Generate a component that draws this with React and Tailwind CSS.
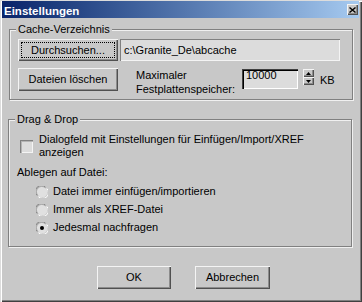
const raised = "bg-[#c8c8c8] shadow-[inset_1px_1px_#f4f4f4,inset_-1px_-1px_#505050,inset_-2px_-2px_#8c8c8c]"

function Radio({ checked }) {
  return (
    <svg width="12" height="12" viewBox="0 0 12 12" className="shrink-0">
      <circle cx="6" cy="6" r="5.5" fill="#e0e0e0" />
      <path d="M1.2 9.5 A5.4 5.4 0 0 1 9.5 1.2" fill="none" stroke="#808080" strokeWidth="1" />
      <path d="M2 9.6 A5 5 0 0 1 9.6 2" fill="none" stroke="#a8a8a8" strokeWidth="1" />
      <path d="M10.8 2.5 A5.4 5.4 0 0 1 2.5 10.8" fill="none" stroke="#ffffff" strokeWidth="1" />
      {checked && <circle cx="6" cy="6" r="2" fill="#000" />}
    </svg>
  )
}

function Spinner() {
  return (
    <div className="ml-[5px] flex w-[11px] flex-col">
      <div className={"flex h-[8px] items-center justify-center " + raised}>
        <svg width="5" height="3" viewBox="0 0 5 3"><path d="M2.5 0 L5 3 L0 3 Z" fill="#000" /></svg>
      </div>
      <div className={"flex h-[8px] items-center justify-center " + raised}>
        <svg width="5" height="3" viewBox="0 0 5 3"><path d="M0 0 L5 0 L2.5 3 Z" fill="#000" /></svg>
      </div>
    </div>
  )
}

export default function App() {
  return (
    <div className="flex h-[302px] w-[362px] flex-col bg-[#c8c8c8] pt-[1px] pr-[3px] pb-[3px] pl-[2px] font-['Liberation_Sans',Arial,sans-serif] text-[11px] leading-[13px] text-black shadow-[inset_1px_1px_#dcdcdc,inset_2px_2px_#ffffff,inset_-1px_-1px_#404040,inset_-2px_-2px_#808080]">
      <div className="flex h-[17px] justify-between bg-gradient-to-r from-[#0a246a] to-[#a6caf0] pr-[1px] pl-[2px]">
        <span className="mt-[4px] text-[11.5px] font-bold text-white">Einstellungen</span>
        <div className={"mt-[3px] flex h-[11px] w-[11px] items-center justify-center " + raised}>
          <svg width="7" height="6" viewBox="0 0 7 6">
            <path d="M0.5 0.5 L6.5 5.5 M6.5 0.5 L0.5 5.5" stroke="#000" strokeWidth="1.4" />
          </svg>
        </div>
      </div>

      <div className="flex flex-col pr-[6px] pl-[7px]">
        <fieldset className="mt-[5px] border border-[#808080] pr-[8px] pb-[3px] pl-[6px] shadow-[1px_1px_#f0f0f0,inset_1px_1px_#f0f0f0]">
          <legend className="bg-[#c8c8c8] px-[2px]">Cache-Verzeichnis</legend>
          <div className="mt-[3px] ml-[2px] flex gap-[2px]">
            <button className={"h-[22px] w-[100px] p-[3px] " + raised}>
              <div className="flex h-full w-full items-center justify-center border border-dotted border-black">
                Durchsuchen...
              </div>
            </button>
            <div className="flex h-[22px] w-[220px] items-center bg-[#dcdcdc] pl-[4px] shadow-[inset_1px_1px_#808080,inset_-1px_-1px_#f4f4f4]">
              c:\Granite_De\abcache
            </div>
          </div>
          <div className="mt-[7px] ml-[2px] flex items-start">
            <button className={"h-[23px] w-[100px] " + raised}>Dateien löschen</button>
            <div className="ml-[18px] w-[106px] leading-[14px]">
              Maximaler
              <br />
              Festplattenspeicher:
            </div>
            <div className="mt-[1px] h-[20px] w-[56px] bg-[#dcdcdc] pl-[4px] shadow-[inset_1px_1px_#404040,inset_2px_2px_#000,inset_-1px_-1px_#ffffff]">
              10000
            </div>
            <div className="mt-[1px]">
              <Spinner />
            </div>
            <span className="mt-[6px] ml-[6px]">KB</span>
          </div>
        </fieldset>

        <fieldset className="mt-[13px] -ml-[1px] mr-[1px] border border-[#808080] pb-[12px] pl-[6px] shadow-[1px_1px_#f0f0f0,inset_1px_1px_#f0f0f0]">
          <legend className="bg-[#c8c8c8] px-[2px]">Drag &amp; Drop</legend>
          <div className="mt-[7px] ml-[5px] flex items-center">
            <div className="h-[13px] w-[13px] shrink-0 bg-[#dcdcdc] shadow-[inset_1px_1px_#808080,inset_2px_2px_#b4b4b4,inset_-1px_-1px_#f4f4f4]" />
            <span className="ml-[6px]">
              Dialogfeld mit Einstellungen für Einfügen/Import/XREF
              <br />
              anzeigen
            </span>
          </div>
          <div className="mt-[7px] ml-[2px]">Ablegen auf Datei:</div>
          <div className="mt-[6px] ml-[21px] flex flex-col gap-[5px]">
            {[
              ["Datei immer einfügen/importieren", false],
              ["Immer als XREF-Datei", false],
              ["Jedesmal nachfragen", true],
            ].map(([label, checked]) => (
              <div key={label} className="flex items-center">
                <Radio checked={checked} />
                <span className="ml-[5px]">{label}</span>
              </div>
            ))}
          </div>
        </fieldset>

        <div className="mt-[19px] ml-[88px] flex gap-[24px]">
          <button className={"h-[23px] w-[74px] " + raised}>OK</button>
          <button className={"h-[23px] w-[75px] " + raised}>Abbrechen</button>
        </div>
      </div>
    </div>
  )
}
